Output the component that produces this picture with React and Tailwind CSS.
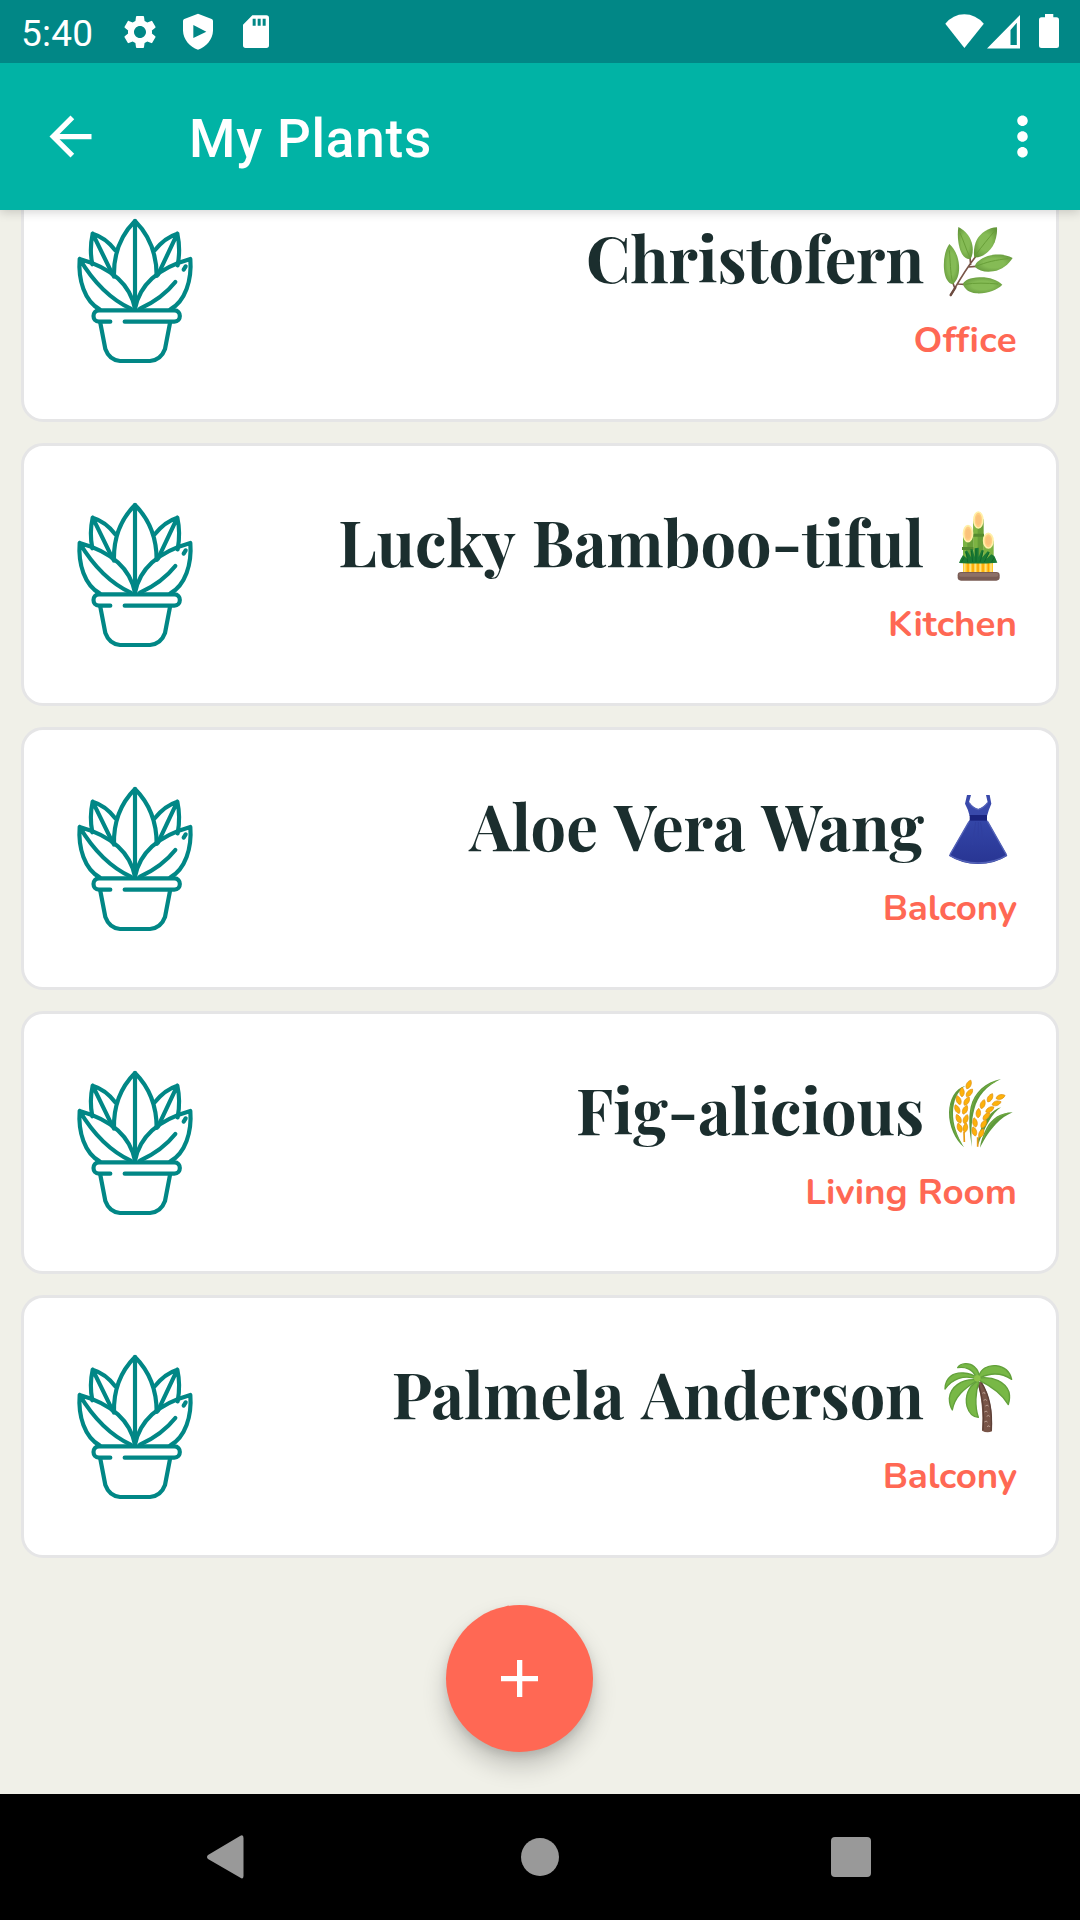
import React from "react";
import { MdSettings, MdArrowBack, MdMoreVert } from "react-icons/md";

const emojiClass = "h-20 w-20 shrink-0 overflow-visible";

function HerbIcon() {
  return (
    <svg className={emojiClass} viewBox="1134 33 240 240">
      <defs>
        <radialGradient id="leaf" cx="50%" cy="50%" r="60%">
          <stop offset="0.45" stopColor="#85bb55" />
          <stop offset="1" stopColor="#64973b" />
        </radialGradient>
      </defs>
      <path d="M1172 271 C1190 240 1215 195 1246 156 M1185 250 C1182 244 1181 240 1179 234 M1195 237 L1212 238 M1226 186 L1247 184 M1232 178 L1230 158" fill="none" stroke="#795548" strokeWidth="5" strokeLinecap="round" />
      <path d="M1172 270 L1186 248" stroke="#6d4c41" strokeWidth="7" strokeLinecap="round" />
      <g fill="url(#leaf)">
        <path d="M1168 117 C1154 137 1150 165 1152 192 C1154 219 1165 236 1178 238 C1193 226 1199 205 1197 180 C1195 152 1182 128 1168 117 Z" />
        <path d="M1195 66 C1191 93 1195 128 1206 147 C1214 160 1224 164 1232 161 C1240 148 1241 124 1232 104 C1224 87 1210 73 1195 66 Z" />
        <path d="M1311 67 C1286 68 1262 83 1250 105 C1242 121 1240 143 1243 157 C1263 159 1285 145 1298 124 C1309 105 1312 84 1311 67 Z" />
        <path d="M1358 159 C1335 146 1299 145 1274 157 C1255 166 1244 177 1245 186 C1257 198 1278 203 1300 199 C1326 195 1346 178 1358 159 Z" />
        <path d="M1327 239 C1311 224 1286 216 1258 217 C1230 218 1213 226 1209 237 C1213 253 1228 263 1248 265 C1281 267 1310 256 1327 239 Z" />
      </g>
      <path d="M1168 136 C1171 165 1171 205 1177 229 M1200 84 C1211 107 1218 133 1229 155 M1303 79 C1286 99 1266 124 1246 151 M1345 161 C1310 164 1275 172 1249 184 M1314 237 C1282 234 1243 233 1215 238" fill="none" stroke="#689f38" strokeWidth="3" />
    </svg>
  );
}

function BambooIcon() {
  return (
    <svg className={emojiClass} viewBox="24 0 240 240">
      <path d="M130 58 L161 58 L161 180 L130 180 Z" fill="#689f38" />
      <path d="M130 58 L143 58 L143 180 L130 180 Z" fill="#7cb342" />
      <path d="M99 100 L129 100 L129 180 L99 180 Z" fill="#689f38" />
      <path d="M99 100 L112 110 L112 180 L99 180 Z" fill="#7cb342" />
      <path d="M160 122 L191 122 L191 180 L160 180 Z" fill="#7cb342" />
      <path d="M130 101 H162 V110 H130 Z M96 141 H130 V150 H96 Z" fill="#558b2f" />
      <g strokeWidth="5" stroke="#fff0a8">
        <ellipse cx="145" cy="60" rx="13.5" ry="24" fill="#ffcc80" />
        <ellipse cx="114" cy="101" rx="13.5" ry="24" fill="#ffcc80" />
        <ellipse cx="175" cy="122" rx="14" ry="22" fill="#ffcc80" />
      </g>
      <g fill="#f9be78" opacity="0.7">
        <ellipse cx="145" cy="60" rx="7" ry="15" />
        <ellipse cx="114" cy="101" rx="7" ry="15" />
        <ellipse cx="175" cy="122" rx="7" ry="13" />
      </g>
      <path d="M99 185 H189 V220 H99 Z" fill="#ffca28" />
      <path d="M114 188 V218 M129 188 V218 M144 188 V218 M159 188 V218 M175 188 V218" stroke="#ffa000" strokeWidth="4" />
      <path d="M104 188 V216 M121 188 V216 M136 188 V216 M151 188 V216 M167 188 V216 M183 188 V216" stroke="#ffe082" strokeWidth="5" />
      <path d="M87 189 Q91 177 99 165 L113 178 L104 155 L111 151 L124 173 L121 148 L128 148 L134 172 L134 145 L146 143 L146 171 L155 150 L161 151 L155 174 L173 154 L179 157 L168 178 L184 163 L193 168 Q198 178 202 188 Q145 193 87 189 Z" fill="#1b7a35" />
      <path d="M94 187 L103 172 M113 187 L109 158 M138 186 V148 M128 186 L124 153 M150 186 L159 154 M163 186 L177 158 M185 186 L192 173" stroke="#0f682c" strokeWidth="3" fill="none" />
      <rect x="83" y="216" width="126" height="26" rx="10" fill="#795c54" />
      <rect x="87" y="219" width="118" height="11" rx="5" fill="#8d7067" />
    </svg>
  );
}

function DressIcon() {
  return (
    <svg className={emojiClass} viewBox="24 852 240 240">
      <defs>
        <linearGradient id="skirt" x1="0" y1="0" x2="0" y2="1">
          <stop offset="0" stopColor="#3446a8" />
          <stop offset="1" stopColor="#283593" />
        </linearGradient>
      </defs>
      <path d="M111 885 L123 885 L117 907 Q128 924 145 927 Q162 923 173 907 L168 885 L179 885 L184 911 Q176 929 171 948 L119 948 Q115 929 105 911 Z" fill="#3949ab" />
      <path d="M119 960 L171 960 L232 1067 Q194 1092 144 1092 Q94 1091 57 1067 Z" fill="url(#skirt)" />
      <path d="M119 945 H171 V962 H119 Z" fill="#1a237e" />
      <path d="M117 908 Q128 924 145 929 Q163 923 173 908 M59 1066 Q97 1088 144 1089 Q194 1088 230 1066 M117 965 L60 1064 M173 965 L229 1064" fill="none" stroke="#5362b8" strokeWidth="4" />
      <path d="M137 966 L127 1035 M152 966 L160 1035 M145 966 V1010" stroke="#303f9f" strokeWidth="3" />
    </svg>
  );
}

const grains = [
  [146, 74, 25], [126, 97, 0], [148, 99, 40], [116, 121, -20], [140, 124, 30],
  [112, 148, -25], [135, 150, 25], [116, 177, -25], [137, 178, 20], [119, 204, -20],
  [136, 204, 10], [210, 114, 30], [241, 111, 72], [188, 133, 20], [229, 130, 72],
  [175, 160, 5], [209, 149, 58], [199, 169, 45], [165, 188, -10], [191, 192, 30],
  [163, 215, -15], [184, 220, 25],
];

function WheatIcon() {
  return (
    <svg className={emojiClass} viewBox="54 24 240 240">
      <g fill="#5f9a3c">
        <path d="M136 77 C105 85 88 118 87 157 C86 199 106 240 132 262 C112 230 98 194 99 157 C100 122 112 94 136 77 Z" />
        <path d="M243 57 C197 65 162 98 152 140 C144 176 149 221 156 261 C153 220 154 181 163 148 C172 109 200 77 243 57 Z" />
        <path d="M243 142 C215 150 192 180 180 214 C174 234 172 249 172 260 C184 230 194 203 209 180 C218 165 230 151 243 142 Z" />
        <path d="M278 157 C242 157 214 176 199 205 C188 227 182 245 180 263 C196 232 210 211 228 192 C243 176 260 165 278 157 Z" />
      </g>
      <path d="M92 135 C90 188 108 229 124 250 M228 64 C184 83 157 112 154 157 M263 160 C227 167 202 197 190 236" fill="none" stroke="#7cb342" strokeWidth="3" opacity="0.7" />
      <path d="M132 216 L133 246 M173 232 L173 260" stroke="#e99a16" strokeWidth="5" />
      {grains.map(([x, y, r]) => (
        <path key={x + "-" + y} d="M0 -15 C9 -7 9 8 0 13.5 C-9 8 -9 -7 0 -15 Z" transform={`translate(${x} ${y}) rotate(${r})`} fill="#fdb10a" stroke="#dd9010" strokeWidth="2" />
      ))}
    </svg>
  );
}

function PalmIcon() {
  return (
    <svg className={emojiClass} viewBox="54 36 240 240">
      <path d="M172 128 C185 170 190 222 186 272 Q201 280 216 274 C220 216 207 160 184 124 Z" fill="#795548" />
      <path d="M184 128 C207 164 218 216 213 272 M176 134 C189 174 193 222 189 270" fill="none" stroke="#5d4037" strokeWidth="4" />
      <path d="M187 160 l6 -3 l2 5 M191 181 l6 -3 l3 4 M196 198 l6 -3 l3 4 M193 216 l6 -3 l3 4 M200 229 l6 -3 l3 4 M193 246 l6 -3 l3 4 M201 260 l6 -3 l3 4" fill="none" stroke="#b59a8e" strokeWidth="3" />
      <g fill="#78b846" stroke="#62a03a" strokeWidth="4" strokeLinejoin="round">
        <path d="M167 108 C157 88 136 79 113 83 C122 68 148 67 163 80 C173 89 177 99 177 108 Z" />
        <path d="M168 116 C132 104 98 116 75 147 C75 113 99 97 130 99 C147 100 163 106 172 113 Z" />
        <path d="M163 119 C124 118 91 141 88 175 C88 191 92 202 97 210 C104 170 131 147 169 123 Z" />
        <path d="M171 124 C145 140 134 169 141 199 C147 220 161 231 175 232 C164 199 166 155 177 126 Z" />
        <path d="M176 110 C182 87 202 75 228 77 C253 80 270 96 275 118 C246 99 216 96 181 113 Z" />
        <path d="M179 114 C221 109 256 126 267 156 C270 169 269 181 265 194 C245 160 214 139 179 122 Z" />
      </g>
      <circle cx="172" cy="115" r="10" fill="#8bc34a" />
    </svg>
  );
}

function PlantIcon() {
  return (
    <svg className="h-[170px] w-[150px] shrink-0" viewBox="0 0 450 510" fill="none" stroke="#018786" strokeWidth="12.5" strokeLinecap="round" strokeLinejoin="round">
      <path d="M225 45 V308" />
      <path d="M225 45 C184 86 160 140 162 212 M225 45 C266 86 290 140 290 210" />
      <path d="M165 132 C147 108 124 91 98 83 C91 115 91 146 97 175 M98 83 L158 206" />
      <path d="M285 132 C304 108 327 91 352 83 C359 115 359 146 353 178 M352 83 L294 206" />
      <path d="M59 159 C134 180 208 222 225 308 M59 159 C54 222 74 285 119 310 M59 159 C93 216 140 274 212 308" />
      <path d="M377 181 L371 191 M391 159 C316 180 242 222 225 308 M391 159 C396 222 376 285 331 310 M346 228 C319 262 284 288 240 308" />
      <path d="M151 347 H117 C95 347 95 313 117 313 H343 C365 313 365 347 343 347 H194" />
      <path d="M121 351 L136 429 Q148 462 180 465 H270 Q303 462 315 429 L330 351" />
    </svg>
  );
}

const plants = [
  { name: "Christofern", room: "Office", Icon: HerbIcon, nameClass: "tracking-[-0.1px]", roomClass: "tracking-[0.4px]" },
  { name: "Lucky Bamboo-tiful", room: "Kitchen", Icon: BambooIcon, nameClass: "[word-spacing:3px]", roomClass: "" },
  { name: "Aloe Vera Wang", room: "Balcony", Icon: DressIcon, nameClass: "[word-spacing:4px]", roomClass: "tracking-[-0.2px]" },
  { name: "Fig-alicious", room: "Living Room", Icon: WheatIcon, nameClass: "", roomClass: "" },
  { name: "Palmela Anderson", room: "Balcony", Icon: PalmIcon, nameClass: "[word-spacing:5px]", roomClass: "tracking-[-0.2px]" },
];

function PlantCard({ name, room, Icon, nameClass, roomClass }) {
  return (
    <article className="flex h-[263px] items-start justify-between rounded-[22px] border-[3px] border-[#e5e5e6] bg-white pt-11 pr-[38px] pl-9">
      <PlantIcon />
      <div className="flex flex-col items-end pt-2.5">
        <div className="flex h-20 items-start gap-3.5">
          <h2 className={`font-["Playfair_Display","Liberation_Serif",serif] text-[63px] leading-[82px] font-bold whitespace-nowrap text-[#1b2e2e] ${nameClass}`}>{name}</h2>
          <Icon />
        </div>
        <p className={`mt-[22px] pr-px font-["Nunito","Lato",sans-serif] text-[36.75px] leading-[44px] font-bold whitespace-nowrap text-[#ff6854] ${roomClass}`}>{room}</p>
      </div>
    </article>
  );
}

function StatusBar() {
  return (
    <header className="relative z-20 flex h-[63px] items-start justify-between bg-[#018786] pt-2.5 pr-[17px] pl-[21px] text-white">
      <div className="flex h-10 items-start">
        <span className="w-[99px] pt-0.5 font-[Roboto,sans-serif] text-[37px] leading-[44px] tracking-[0.2px]">5:40</span>
        <div className="flex gap-[18px]">
          <div className="flex h-10 w-10 items-center justify-center pt-[3px]">
            <MdSettings className="h-10 w-10 shrink-0" />
          </div>
          <svg className="h-10 w-10" viewBox="534 0 120 120">
            <path fill="currentColor" fillRule="evenodd" d="M594 11 L635 27 Q639 29 639 33 V62 C638 88 619 110 594 119 C569 110 550 88 549 62 V33 Q549 29 553 27 Z M580 45 V84 L619 65 Z" />
          </svg>
          <svg className="h-10 w-10" viewBox="708 0 120 120">
            <path fill="currentColor" fillRule="evenodd" d="M757 16 H799 Q807 16 807 24 V106 Q807 114 799 114 H737 Q729 114 729 106 V44 Z M758 26 V47 H767 V26 Z M773 26 V47 H782 V26 Z M788 26 V47 H797 V26 Z" />
          </svg>
        </div>
      </div>
      <svg className="h-10 w-[120px]" viewBox="943 10 120 40" fill="currentColor">
        <path d="M945.3 23.8 Q953 14.3 964.3 14.3 Q975.8 14.3 983.8 23.8 L964.4 48 Z" />
        <path fillRule="evenodd" d="M1020 15 V48.5 H987 Z M1010.5 30 V45 H1016.8 V22.8 Z" />
        <path d="M1045 14 H1053.3 V17.3 H1056.5 Q1059 17.3 1059 20 V45.5 Q1059 48 1056.5 48 H1041.5 Q1039 48 1039 45.5 V20 Q1039 17.3 1041.5 17.3 H1045 Z" />
      </svg>
    </header>
  );
}

export default function App() {
  return (
    <div className="flex h-[1920px] w-[1080px] flex-col overflow-hidden bg-[#f0f0e8]">
      <StatusBar />
      <div className="relative z-10 flex h-[147px] items-center bg-[#01b3a5] pr-[26px] pl-[39px] text-white shadow-[0_2px_10px_rgba(0,0,0,0.18)]">
        <MdArrowBack className="h-[63px] w-[63px]" />
        <h1 className="ml-[87px] flex-1 pt-1 font-[Roboto,sans-serif] text-[53px] leading-[62px] font-medium tracking-[0.8px]">My Plants</h1>
        <MdMoreVert className="h-[63px] w-[63px]" />
      </div>
      <main className="h-[1584px] overflow-hidden">
        <div className="-mt-[51px] flex flex-col gap-[21px] px-[21px]">
          {plants.map((p) => (
            <PlantCard key={p.name} {...p} />
          ))}
        </div>
        <button className="mt-[47px] ml-[446px] flex h-[147px] w-[147px] items-center justify-center rounded-full bg-[#ff6854] shadow-[0_14px_24px_rgba(0,0,0,0.2),0_4px_8px_rgba(0,0,0,0.1)]">
          <svg className="h-[37px] w-[37px]" viewBox="0 0 37 37">
            <path d="M16 0 H21.3 V16 H37 V21.3 H21.3 V37 H16 V21.3 H0 V16 H16 Z" fill="white" />
          </svg>
        </button>
      </main>
      <nav className="flex h-[126px] items-center justify-between bg-black pr-[209px] pl-[206px] text-[#999999]">
        <svg className="h-11 w-[38px]" viewBox="0 0 38 44">
          <path d="M34 1 Q37.5 -1 37.5 3 V41 Q37.5 45 34 42.5 L2 24 Q0 22 2 20 Z" fill="currentColor" />
        </svg>
        <div className="ml-1 h-[38px] w-[38px] rounded-full bg-[#999999]" />
        <div className="h-10 w-10 rounded-[4px] bg-[#999999]" />
      </nav>
    </div>
  );
}
